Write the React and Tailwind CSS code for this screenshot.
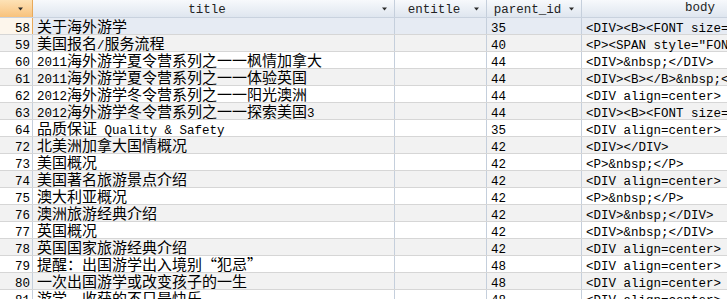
import React from 'react'

const rows = [
  ['58', '关于海外游学', '', '35', '<DIV><B><FONT size=3>'],
  ['59', '美国报名/服务流程', '', '40', '<P><SPAN style="FONT-SIZE'],
  ['60', '2011海外游学夏令营系列之一一枫情加拿大', '', '44', '<DIV>&nbsp;</DIV>'],
  ['61', '2011海外游学夏令营系列之一一体验英国', '', '44', '<DIV><B></B>&nbsp;</DIV>'],
  ['62', '2012海外游学冬令营系列之一一阳光澳洲', '', '44', '<DIV align=center>'],
  ['63', '2012海外游学冬令营系列之一一探索美国3', '', '44', '<DIV><B><FONT size=3>'],
  ['64', '品质保证 Quality & Safety', '', '35', '<DIV align=center>'],
  ['72', '北美洲加拿大国情概况', '', '42', '<DIV></DIV>'],
  ['73', '美国概况', '', '42', '<P>&nbsp;</P>'],
  ['74', '美国著名旅游景点介绍', '', '42', '<DIV align=center>'],
  ['75', '澳大利亚概况', '', '42', '<P>&nbsp;</P>'],
  ['76', '澳洲旅游经典介绍', '', '42', '<DIV>&nbsp;</DIV>'],
  ['77', '英国概况', '', '42', '<DIV>&nbsp;</DIV>'],
  ['78', '英国国家旅游经典介绍', '', '42', '<DIV align=center>'],
  ['79', '提醒：出国游学出入境别“犯忌”', '', '48', '<DIV align=center>'],
  ['80', '一次出国游学或改变孩子的一生', '', '48', '<DIV align=center>'],
  ['81', '游学，收获的不只是快乐', '', '48', '<DIV align=center>'],
]

// ascii runs get a half-width mono face, the rest a CJK face
const Mixed = ({ text }) =>
  text
    .split(/([\x20-\x7e]+)/)
    .filter(Boolean)
    .map((p, i) =>
      /^[\x20-\x7e]+$/.test(p) ? (
        <span key={i} className="font-['Liberation_Mono',monospace] text-[12.5px] whitespace-pre">{p}</span>
      ) : (
        <span key={i} className="font-['Noto_Sans_CJK_SC',sans-serif] text-[15px]">{p}</span>
      )
    )

const Arrow = () => (
  <svg width="7" height="4" viewBox="0 0 7 4" className="shrink-0">
    <path d="M1 0.5h5L3.5 3.5z" fill="#2b2b2b" />
  </svg>
)

const HeadCell = ({ label, className }) => (
  <div className={`flex items-center h-full border-r border-[#c5cfdc] pr-[6px] ${className}`}>
    <div className="flex-1 text-center text-[#222] leading-[17px] whitespace-nowrap overflow-x-clip">
      <Mixed text={label} />
    </div>
    <Arrow />
  </div>
)

const cell = 'shrink-0 pl-[4px] whitespace-nowrap overflow-x-clip border-r border-[#c5cfdc]'

export default function App() {
  return (
    <div className="w-[727px] h-[299px] overflow-hidden bg-white text-black">
      <div className="flex h-[18px] border-b border-[#c9d2de] bg-gradient-to-b from-[#f7f9fc] to-[#dfe6ef]">
        <div className="w-[33px] shrink-0 flex items-center justify-end pr-[8px] border-r border-[#e8a95a] bg-gradient-to-b from-[#fde2b6] to-[#f8c27c]">
          <Arrow />
        </div>
        <HeadCell label="title" className="w-[362px] shrink-0" />
        <HeadCell label="entitle" className="w-[92px] shrink-0" />
        <HeadCell label="parent_id" className="w-[95px] shrink-0" />
        <div className="flex-1 flex items-center h-full text-[#222] leading-[17px] whitespace-nowrap pl-[103px]">
          <Mixed text="body" />
        </div>
      </div>

      {rows.map((r, i) => {
        const sel = i === 0
        const bg = sel ? 'bg-[#e6ebf3]' : i % 2 ? 'bg-[#f2f2f2]' : 'bg-white'
        return (
          <div key={r[0]} className={`flex h-[17px] border-b border-[#d6d6d6] leading-[16px] ${bg}`}>
            <div
              className={`w-[33px] shrink-0 text-right pr-[2px] whitespace-nowrap border-r ${
                sel ? 'bg-[#fdf6ec] border-[#e8a95a]' : 'border-[#c5cfdc]'
              }`}
            >
              <Mixed text={r[0]} />
            </div>
            <div className={`w-[362px] ${cell}`}>
              <Mixed text={r[1]} />
            </div>
            <div className={`w-[92px] ${cell}`}>
              <Mixed text={r[2]} />
            </div>
            <div className={`w-[95px] ${cell}`}>
              <Mixed text={r[3]} />
            </div>
            <div className="flex-1 pl-[4px] whitespace-nowrap overflow-x-clip">
              <Mixed text={r[4]} />
            </div>
          </div>
        )
      })}
    </div>
  )
}
